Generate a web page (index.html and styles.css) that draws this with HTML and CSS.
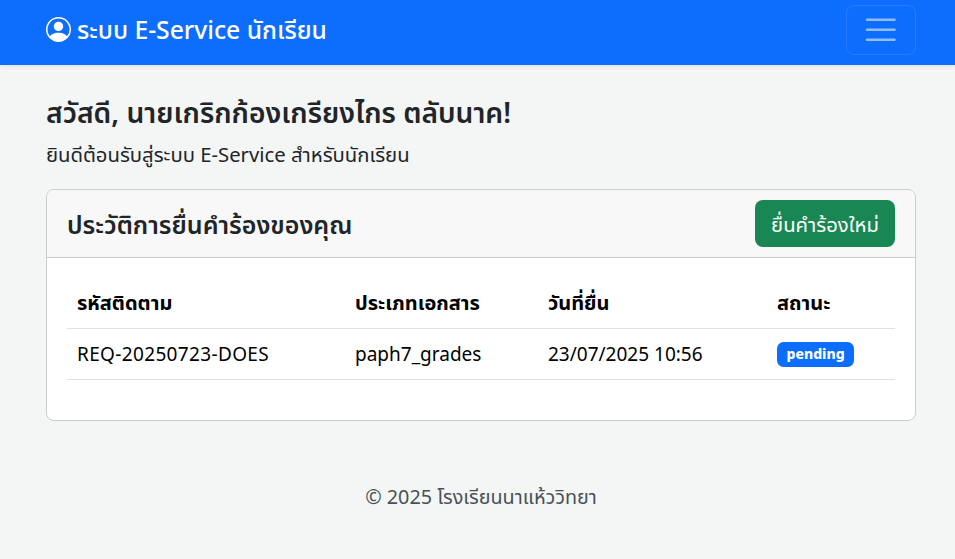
FILE: index.html
```html
<!DOCTYPE html>
<html lang="th">
<head>
<meta charset="utf-8">
<title>ระบบ E-Service นักเรียน</title>
<link rel="stylesheet" href="styles.css">
</head>
<body>
<nav class="navbar">
  <a class="brand" href="#">
    <svg class="brand-icon" viewBox="0 0 16 16" fill="#fff"><path d="M11 6a3 3 0 1 1-6 0 3 3 0 0 1 6 0"/><path fill-rule="evenodd" d="M0 8a8 8 0 1 1 16 0A8 8 0 0 1 0 8m8-7a7 7 0 0 0-5.468 11.37C3.242 11.226 4.805 10 8 10s4.757 1.225 5.468 2.37A7 7 0 0 0 8 1"/></svg>
    <span>ระบบ E-Service นักเรียน</span>
  </a>
  <button class="toggler" type="button" aria-label="menu">
    <svg viewBox="0 0 30 30" class="toggler-icon"><path stroke="rgba(255,255,255,.55)" stroke-linecap="round" stroke-miterlimit="10" stroke-width="2" d="M4 7h22M4 15h22M4 23h22"/></svg>
  </button>
</nav>
<main class="container">
  <h1 class="greeting">สวัสดี, นายเกริกก้องเกรียงไกร ตลับนาค!</h1>
  <p class="lead">ยินดีต้อนรับสู่ระบบ E-Service สำหรับนักเรียน</p>
  <section class="card">
    <header class="card-header">
      <h2 class="card-title">ประวัติการยื่นคำร้องของคุณ</h2>
      <a class="btn" href="#">ยื่นคำร้องใหม่</a>
    </header>
    <div class="card-body">
      <table class="table">
        <thead>
          <tr><th class="c1">รหัสติดตาม</th><th class="c2">ประเภทเอกสาร</th><th class="c3">วันที่ยื่น</th><th>สถานะ</th></tr>
        </thead>
        <tbody>
          <tr><td class="code">REQ-20250723-DOES</td><td>paph7_grades</td><td>23/07/2025 10:56</td><td><span class="badge">pending</span></td></tr>
        </tbody>
      </table>
    </div>
  </section>
</main>
<footer class="footer">© 2025 โรงเรียนนาแห้ววิทยา</footer>
</body>
</html>
```
FILE: styles.css
```css
* { box-sizing: border-box; }
html, body { margin: 0; }
body {
  background: #f4f6f5;
  color: #212529;
  font-family: "Noto Sans", "Noto Sans Thai", "Open Sans", sans-serif;
  font-size: 19px;
  line-height: 24px;
  height: 559px;
  overflow: hidden;
}
.navbar {
  height: 65px;
  background: #0d6efd;
  display: flex;
  align-items: center;
  justify-content: space-between;
  padding: 0 39px 5px 46px;
  box-shadow: 0 2px 4px rgba(0,0,0,.07);
}
.brand {
  display: flex;
  align-items: center;
  gap: 6px;
  color: #fff;
  text-decoration: none;
  font-size: 24.7px;
  line-height: 30px;
  font-weight: 500;
}
.brand-icon { width: 25px; height: 25px; margin-top: -2px; }
.toggler {
  width: 70px;
  height: 50px;
  background: transparent;
  border: 1px solid rgba(255,255,255,.1);
  border-radius: 8px;
  padding: 0;
  display: flex;
  align-items: center;
  justify-content: center;
}
.toggler-icon { width: 37.5px; height: 37.5px; flex: none; }
.container { padding: 33px 39px 0 46px; }
.greeting { margin: 0; font-size: 28.2px; font-weight: 600; line-height: 29px; }
.lead { margin: 15px 0 23px; font-size: 20.3px; line-height: 24px; }
.card {
  background: #fff;
  border: 1px solid #ccc;
  border-radius: 8px;
  height: 232px;
  overflow: hidden;
}
.card-header {
  height: 68px;
  background: #f8f8f8;
  border-bottom: 1px solid #ccc;
  display: flex;
  align-items: center;
  justify-content: space-between;
  padding: 0 20px;
}
.card-title { margin: 0; font-size: 25px; font-weight: 600; line-height: 30px; }
.btn {
  background: #198754;
  color: #fff;
  text-decoration: none;
  border-radius: 8px;
  width: 140px;
  height: 47px;
  display: flex;
  align-items: center;
  justify-content: center;
  font-size: 20.3px;
}
.card-body { padding: 20px; }
.table { width: 100%; border-collapse: collapse; color: #000; table-layout: fixed; }
.table th, .table td {
  text-align: left;
  padding: 0 10px;
  border-bottom: 1px solid #dee2e6;
  height: 51px;
  white-space: nowrap;
}
.table th { font-weight: 700; font-size: 20px; height: 50px; }
.table .code { letter-spacing: .35px; }
.c1 { width: 278px; }
.c2 { width: 193px; }
.c3 { width: 229px; }
.badge {
  display: inline-block;
  background: #0d6efd;
  color: #fff;
  border-radius: 6.5px;
  font-size: 14px;
  font-weight: 800;
  line-height: 1;
  padding: 5px 9.5px 6px;
  vertical-align: middle;
}
.footer { margin-top: 64px; padding-left: 7px; text-align: center; color: #495057; font-size: 19.8px; }
```
